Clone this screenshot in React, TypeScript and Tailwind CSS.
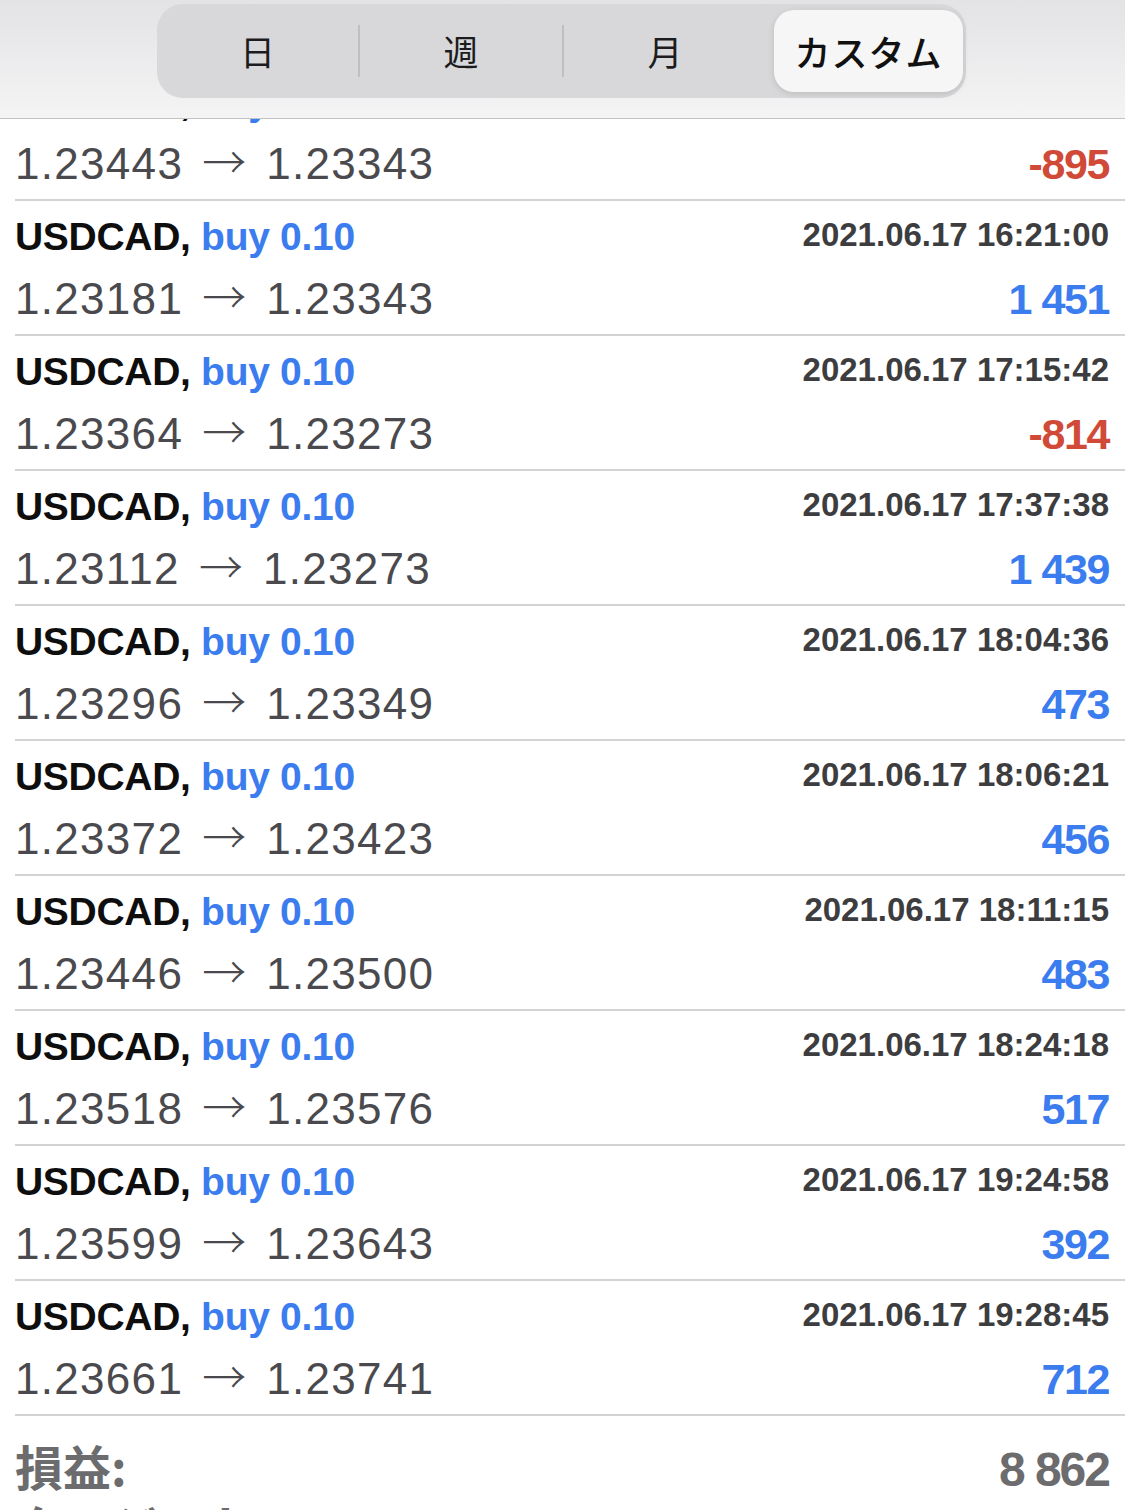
import React from "react";

type Row = { from: string; to: string; date: string; profit: string; loss?: boolean };

const rows: Row[] = [
  { from: "1.23443", to: "1.23343", date: "2021.06.17 15:52:07", profit: "-895", loss: true },
  { from: "1.23181", to: "1.23343", date: "2021.06.17 16:21:00", profit: "1 451" },
  { from: "1.23364", to: "1.23273", date: "2021.06.17 17:15:42", profit: "-814", loss: true },
  { from: "1.23112", to: "1.23273", date: "2021.06.17 17:37:38", profit: "1 439" },
  { from: "1.23296", to: "1.23349", date: "2021.06.17 18:04:36", profit: "473" },
  { from: "1.23372", to: "1.23423", date: "2021.06.17 18:06:21", profit: "456" },
  { from: "1.23446", to: "1.23500", date: "2021.06.17 18:11:15", profit: "483" },
  { from: "1.23518", to: "1.23576", date: "2021.06.17 18:24:18", profit: "517" },
  { from: "1.23599", to: "1.23643", date: "2021.06.17 19:24:58", profit: "392" },
  { from: "1.23661", to: "1.23741", date: "2021.06.17 19:28:45", profit: "712" },
];

const sans = "font-['Liberation_Sans','Noto_Sans_CJK_JP',sans-serif]";
const cjk = "font-['Noto_Sans_CJK_JP','Liberation_Sans',sans-serif]";

function Header() {
  return (
    <div className="absolute left-0 right-0 top-0 z-10 h-[119px] border-b-[1.5px] border-[#c2c2c4] bg-gradient-to-b from-[#e3e3e5] to-[#f4f4f5] pl-[157px] pt-[4px]">
      <div className={`flex h-[94px] w-[809px] items-center rounded-[26px] bg-[#d8d8da] ${cjk}`}>
        <div className="flex h-full w-[201px] items-center justify-center text-[35px] font-normal text-[#1c1c1e]">日</div>
        <div className="h-[52px] w-[2px] bg-[#bfbfc2]" />
        <div className="flex h-full w-[202px] items-center justify-center text-[35px] font-normal text-[#1c1c1e]">週</div>
        <div className="h-[52px] w-[2px] bg-[#bfbfc2]" />
        <div className="flex h-full w-[202px] items-center justify-center text-[35px] font-normal text-[#1c1c1e]">月</div>
        <div className="flex h-full w-[200px] py-[6px] pl-[8px] pr-[3px]">
          <div className="flex flex-1 items-center justify-center rounded-[20px] bg-[#f6f6f7] text-[36px] font-medium tracking-[1px] text-[#111] shadow-[0_2px_6px_rgba(0,0,0,0.12)]">
            カスタム
          </div>
        </div>
      </div>
    </div>
  );
}

function TradeRow({ r }: { r: Row }) {
  return (
    <div className={`ml-[15px] box-border flex h-[135px] flex-col border-b-2 border-[#d3d3d5] pr-[16px] pt-[14px] ${sans}`}>
      <div className="flex h-[44px] items-start justify-between">
        <div className="text-[39px] font-bold leading-[44px] tracking-[-0.3px] text-[#0e0e0e]">
          USDCAD, <span className="text-[#3b7cef]">buy 0.10</span>
        </div>
        <div className="text-[33px] font-bold leading-[39px] tracking-[0px] text-[#3d3d40]">{r.date}</div>
      </div>
      <div className="mt-[11px] flex h-[50px] items-baseline justify-between">
        <div className="flex items-baseline text-[44px] font-normal leading-[50px] tracking-[1.3px] text-[#4a4a4e]">
          <span>{r.from}</span>
          <span className={`ml-[19px] mr-[20px] text-[44px] font-light leading-[50px] tracking-normal ${cjk}`}>→</span>
          <span>{r.to}</span>
        </div>
        <div className={`text-[43px] font-bold leading-[50px] tracking-[-1.4px] ${r.loss ? "text-[#d04a37]" : "text-[#3b7cef]"}`}>
          {r.profit}
        </div>
      </div>
    </div>
  );
}

export default function App() {
  return (
    <div className="relative h-[1510px] w-[1125px] overflow-hidden bg-white">
      <Header />
      <div className="pt-[66px]">
        {rows.map((r, i) => (
          <TradeRow key={i} r={r} />
        ))}
        <div className={`ml-[15px] pr-[16px] pt-[21px] ${sans}`}>
          <div className="flex h-[56px] items-baseline justify-between text-[#6c6c6e]">
            <span className={`text-[48px] font-bold leading-[56px] ${cjk}`}>損益:</span>
            <span className="text-[48px] font-bold leading-[56px] tracking-[-2px]">8 862</span>
          </div>
          <div className="mt-[4px] flex h-[56px] items-baseline text-[#6c6c6e]">
            <span className={`text-[48px] font-bold leading-[56px] ${cjk}`}>クレジット:</span>
          </div>
        </div>
      </div>
    </div>
  );
}
